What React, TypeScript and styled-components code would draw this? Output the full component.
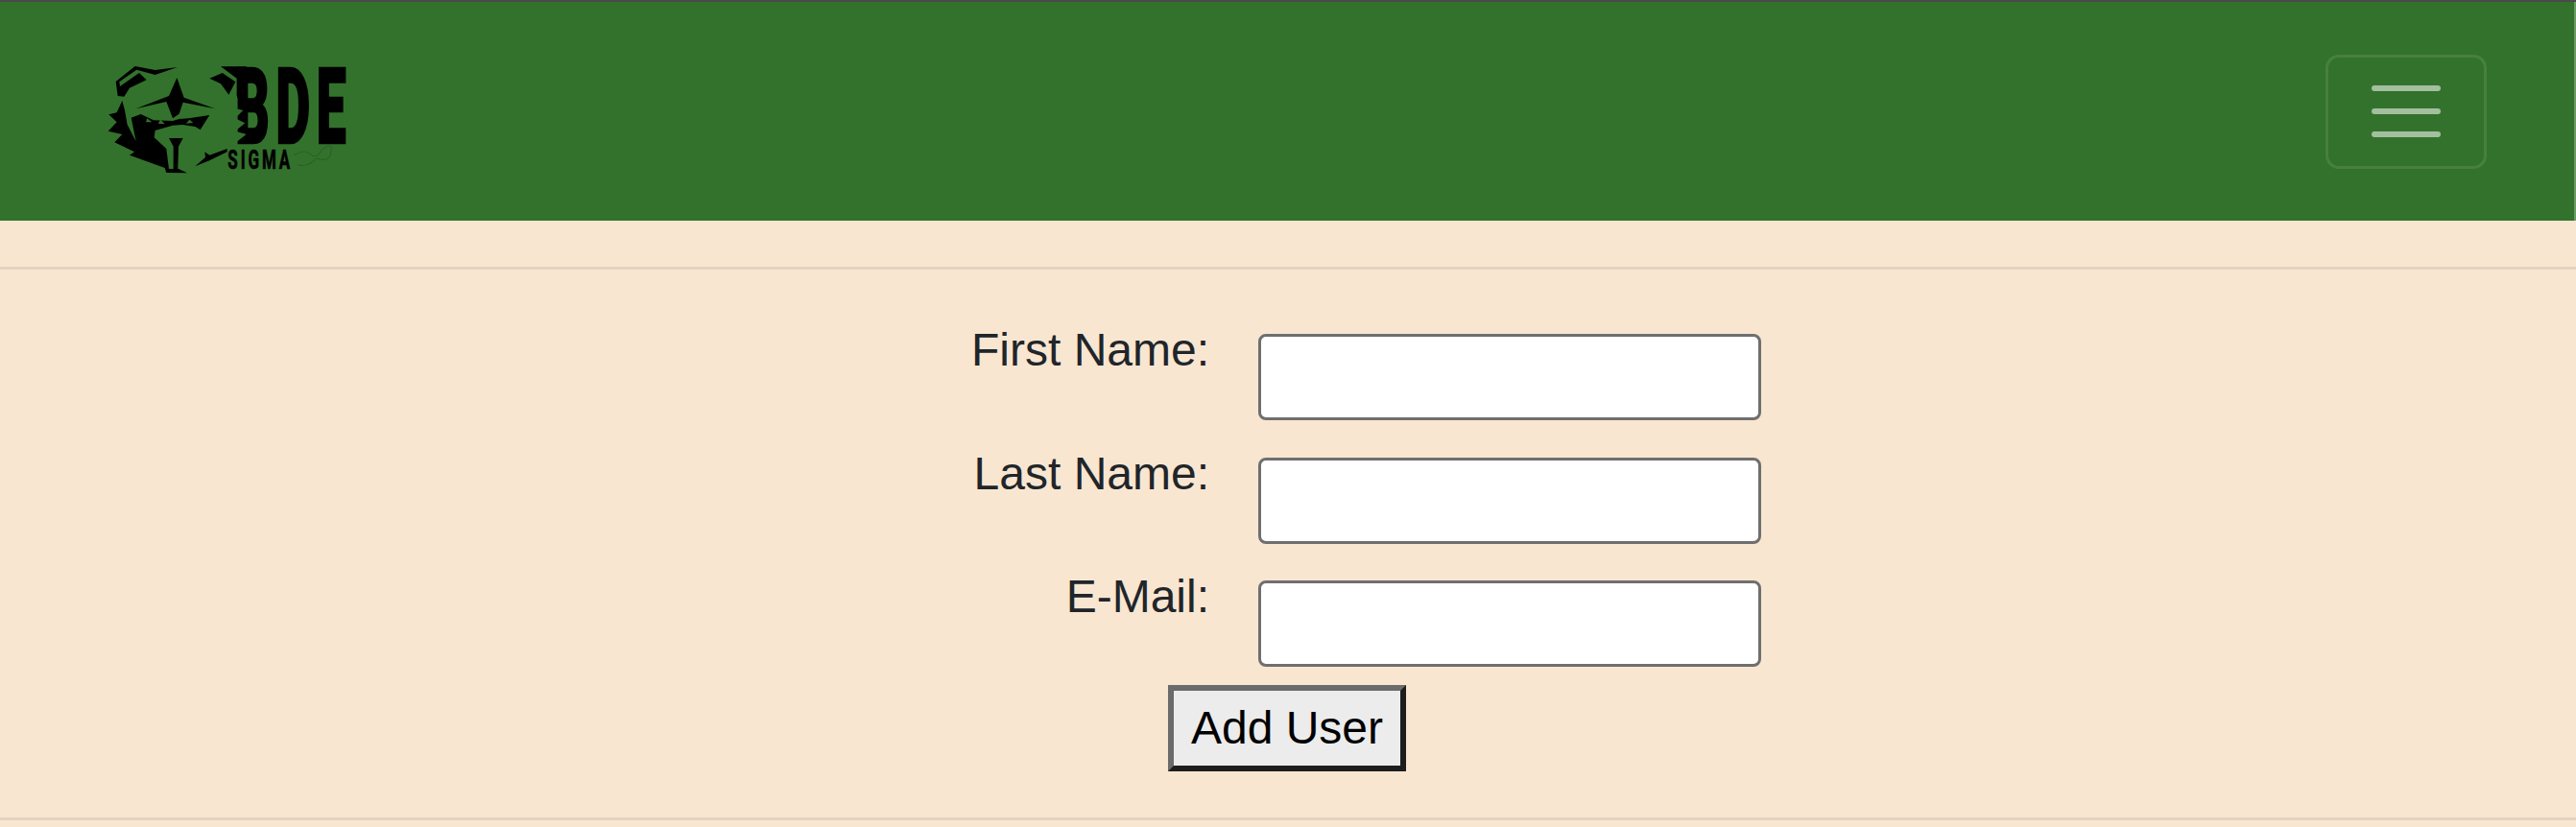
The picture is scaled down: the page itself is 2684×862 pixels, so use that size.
import React from "react";
import styled, { createGlobalStyle } from "styled-components";

const Global = createGlobalStyle`
  html, body { margin: 0; padding: 0; background: #f8e6d1; }
  body { font-family: "Liberation Sans", Arial, sans-serif; color: #212529; }
`;

const Page = styled.div`
  min-height: 862px;
  border-top: 2px solid #4a4a4a;
  box-sizing: border-box;
`;

const Nav = styled.nav`
  height: 228px;
  background: #33722c;
  display: flex;
  align-items: center;
  justify-content: space-between;
  padding: 0 91px 0 90px;
  box-sizing: border-box;
  border-right: 2px solid #6c9a67;
`;

const LogoMark = styled.svg`
  width: 300px;
  height: 160px;
  display: block;
  margin-top: 8px;
`;

const Toggler = styled.button`
  width: 168px;
  height: 119px;
  padding: 0;
  background: transparent;
  border: 3px solid rgba(255, 255, 255, 0.1);
  border-radius: 14px;
  display: flex;
  align-items: center;
  justify-content: center;
`;

const TogglerIcon = styled.svg`
  width: 90px;
  height: 90px;
  display: block;
`;

const Rule = styled.hr`
  margin: 0;
  border: 0;
  height: 3px;
  background: #e3d2bf;
`;

const Spacer = styled.div`
  height: 48px;
`;

const Form = styled.form`
  width: 986px;
  margin: 0 auto;
  padding-top: 48px;
  height: 571px;
  box-sizing: border-box;
  display: flex;
  flex-direction: column;
`;

const Field = styled.div`
  display: grid;
  grid-template-columns: 411px 524px;
  column-gap: 51px;
  height: 128.5px;
  align-items: start;
`;

const Label = styled.label`
  font-size: 48px;
  line-height: 72px;
  text-align: right;
`;

const Input = styled.input`
  height: 90px;
  margin-top: 19px;
  box-sizing: border-box;
  background: #fff;
  border: 3px solid #6f6f6f;
  border-radius: 8px;
  padding: 0;
  outline: none;
`;

const Actions = styled.div`
  display: flex;
  justify-content: center;
  margin-top: -1px;
  padding-right: 2px;
`;

const Submit = styled.button`
  width: 248px;
  height: 90px;
  box-sizing: border-box;
  font: 48px "Liberation Sans", Arial, sans-serif;
  color: #000;
  background: #ececec;
  border-width: 6px;
  border-style: solid;
  border-color: #6b6b6b #1d1d1d #1d1d1d #6b6b6b;
  padding: 0;
`;

const Bear = () => (
  <LogoMark viewBox="0 0 900 480" aria-label="BDE Sigma">
    <g fill="#000">
      <path d="M92 135 L152 87 L215 99 L285 90 L215 114 L157 98 L103 136 L105 150 L165 108 L188 130 L135 155 L118 182 L98 180Z" />
      <path d="M112 195 L95 232 L70 238 L95 262 L68 290 L112 300 L88 325 L150 355 L135 365 L245 405 L250 420 L315 421 L288 408 L258 408 L250 345 L212 310 L215 288 L270 272 L300 270 L340 276 L356 286 L385 240 L320 250 L290 252 L270 258 L210 256 L170 237 L140 248 L155 322 L128 270 L120 225Z" />
      <path d="M283 123 L305 185 L402 220 L302 200 L290 236 L270 250 L250 198 L155 220 L258 180Z" />
      <path d="M258 312 L302 312 L288 338 L286 408 L272 408 L272 338Z" />
      <path d="M385 125 L425 108 L466 136 L445 176 L420 142Z" />
      <path d="M420 88 L500 88 L500 210 L490 225 L470 180 L470 125Z" />
      <path d="M340 400 L372 372 L370 355 L385 365 L440 345 L440 355 L385 382Z" />
      <text transform="translate(466 326) scale(0.5 1)" fontFamily="Roboto, 'Liberation Sans', sans-serif" fontWeight="900" fontSize="330" letterSpacing="40" stroke="#000" strokeWidth="8">BDE</text>
      <text transform="translate(442 408) scale(0.62 1)" fontFamily="Roboto, 'Liberation Sans', sans-serif" fontWeight="700" fontSize="82" letterSpacing="14" stroke="#000" strokeWidth="2">SIGMA</text>
    </g>
    <g fill="#33722c">
      <path d="M190 250 L205 262 L186 262Z M232 254 L245 268 L224 266Z M322 254 L334 264 L312 266Z" />
      <path d="M450 215 L490 225 L465 250 L496 265 L465 290 L500 300 L455 335 L450 335Z" />
    </g>
    <path d="M650 365 Q680 345 700 362 T735 350 Q770 320 765 355 T720 375 Q690 405 660 395" fill="none" stroke="#000" strokeOpacity="0.25" strokeWidth="4" strokeDasharray="3 3" />
  </LogoMark>
);

export default function App() {
  return (
    <Page>
      <Global />
      <Nav>
        <Bear />
        <Toggler type="button" aria-label="Toggle navigation">
          <TogglerIcon viewBox="0 0 30 30">
            <path d="M4 7h22M4 15h22M4 23h22" stroke="rgba(255,255,255,0.55)" strokeWidth="2" strokeLinecap="round" fill="none" />
          </TogglerIcon>
        </Toggler>
      </Nav>
      <Spacer />
      <Rule />
      <Form onSubmit={(e) => e.preventDefault()}>
        <Field>
          <Label htmlFor="first">First Name:</Label>
          <Input id="first" type="text" />
        </Field>
        <Field>
          <Label htmlFor="last">Last Name:</Label>
          <Input id="last" type="text" />
        </Field>
        <Field>
          <Label htmlFor="email">E-Mail:</Label>
          <Input id="email" type="text" />
        </Field>
        <Actions>
          <Submit type="submit">Add User</Submit>
        </Actions>
      </Form>
      <Rule />
    </Page>
  );
}
